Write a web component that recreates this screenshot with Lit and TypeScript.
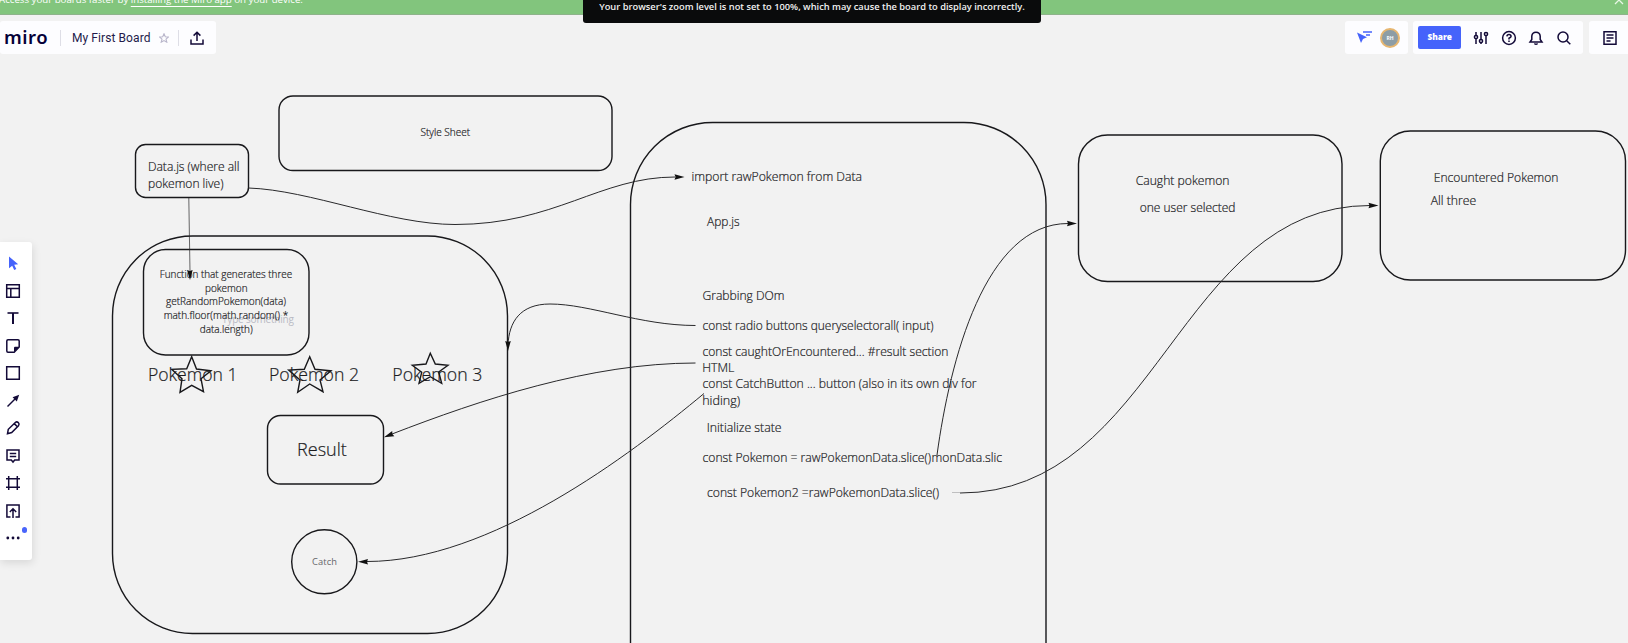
import { LitElement, html, svg, css } from "lit";
import { customElement } from "lit/decorators.js";

type Label = [x: number, y: number, width: number, size: number, text: string];

const boxes = [
  [279, 96, 333, 74.5, 14],
  [135.5, 144.5, 113, 53, 10],
  [112.5, 236, 395, 397.5, 80],
  [143.5, 249.5, 165.5, 105.5, 22],
  [267.5, 415.5, 116, 68.5, 13],
  [630.5, 122.5, 415.5, 640, 82],
  [1078.5, 135, 263.5, 146.5, 29],
  [1380.3, 131, 245.2, 149, 30],
];

const labels: Label[] = [
  [420.5, 135.8, 49.5, 10, "Style Sheet"],
  [148, 171.3, 91.5, 12, "Data.js (where all"],
  [148, 187.7, 75.5, 12, "pokemon live)"],
  [159.7, 277.8, 132.5, 10, "Function that generates three"],
  [205, 291.6, 42.5, 10, "pokemon"],
  [166, 305.3, 120, 10, "getRandomPokemon(data)"],
  [163.7, 319, 124.5, 10, "math.floor(math.random() *"],
  [199.7, 332.6, 53, 10, "data.length)"],
  [148, 380.6, 89.5, 17.5, "Pokemon 1"],
  [269, 380.6, 90, 17.5, "Pokemon 2"],
  [392.3, 380.6, 90, 17.5, "Pokemon 3"],
  [297, 456, 49.8, 18, "Result"],
  [691.5, 181, 170.5, 12, "import rawPokemon from Data"],
  [707, 225.5, 32.5, 12, "App.js"],
  [702.5, 300, 82, 12, "Grabbing DOm"],
  [702.5, 330.3, 231, 12, "const radio buttons queryselectorall( input)"],
  [702.5, 355.8, 246, 12, "const caughtOrEncountered... #result section"],
  [702.2, 372, 32, 12, "HTML"],
  [702.5, 388.3, 274, 12, "const CatchButton ... button (also in its own div for"],
  [702.2, 405, 38, 12, "hiding)"],
  [706.7, 432, 74.8, 12, "Initialize state"],
  [702.5, 462.3, 228.5, 12, "const Pokemon = rawPokemonData.slice()"],
  [931.5, 462.3, 70.5, 12, "monData.slic"],
  [707, 497.3, 232, 12, "const Pokemon2 =rawPokemonData.slice()"],
  [1135.7, 185, 93.8, 12, "Caught pokemon"],
  [1139.7, 212, 95.8, 12, "one user selected"],
  [1433.8, 182, 124.7, 12, "Encountered Pokemon"],
  [1430.7, 205, 45.5, 12, "All three"],
];

const connectors = [
  "M248.5 188C310 190 390 224.5 455 224.5C555 224.5 600 177 675 177",
  "M695.5 325.5C640 325.5 590 304 550 304C520 304 509 322 508 345",
  "M695.5 363C590 363 480 400 392 434",
  "M704 393.5C630 455 490 561.5 367 561.5",
  "M937 455C950 360 985 223.5 1068 223.5",
  "M960 493C1158 493 1178 205.5 1370 205.5",
];

// Tip position and heading in degrees.
const heads = [
  [684.5, 177, 0],
  [190, 280, 89],
  [508, 351, 90],
  [384, 437.3, 158],
  [358, 561.8, 180],
  [1077, 223.5, 0],
  [1378.5, 205.5, 0],
];

const stars = [
  "M191.7 356.7L196.5 369L211 370.7L201 378.7L203.5 391.7L191.7 385.3L180 392.3L182 378.7L171.7 369.3L186.7 368.7Z",
  "M309.7 356.7L315 369.3L331 370.7L320 380L323 391.7L309.7 384L297.7 392.3L300 380L288.7 370L304.3 369.3Z",
  "M430.3 353.3L435.3 364L448 365.3L438.7 372L441.7 383.3L430.3 376.7L419 383.3L421.7 372.3L412.3 365.3L426 364Z",
];

const icon = (body: unknown, size = 16) => html`<svg class="icon" width=${size} height=${size} viewBox="0 0 16 16">${body}</svg>`;

const tools = [
  svg`<path class="accent" d="M4 1.5L13.2 9.3L9.2 9.7L11.3 14L9.2 15L7.2 10.7L4 13.3Z"/>`,
  svg`<path d="M1.7 1.7H14.3V14.3H1.7ZM1.7 5.5H14.3M5.8 5.5V14.3"/>`,
  svg`<path d="M2.5 3H13.5" stroke-width="1.6"/><path d="M8 3V14" stroke-width="2"/>`,
  svg`<path d="M3 1.8H13Q14.2 1.8 14.2 3V9L9.2 14.2H3Q1.8 14.2 1.8 13V3Q1.8 1.8 3 1.8Z"/><path class="solid" d="M14 8.8H10Q9 8.8 9 10V14Z"/>`,
  svg`<path d="M1.7 1.7H14.3V14.3H1.7Z"/>`,
  svg`<path d="M2.5 13.5L10 6"/><path class="solid" d="M14.2 1.8L11.8 8.4L7.6 4.2Z"/>`,
  svg`<path d="M2.5 13.7L3.3 9.3L10.3 2.5Q11.8 1.2 13.3 2.6Q14.8 4.2 13.5 5.7L6.7 12.6ZM9.3 3.6L12.4 6.7"/>`,
  svg`<path d="M2 2H14V12H9.7L8 14L6.3 12H2ZM4.8 5.5H11.2M4.8 8.5H11.2"/>`,
  svg`<path d="M1 3.7H15M1 12.3H15M3.7 1V15M12.3 1V15"/>`,
  svg`<path d="M5.5 14H1.9V2H14.1V14H10.5M8 15V6M4.8 9L8 5.8L11.2 9"/>`,
  svg`<g class="solid"><circle cx="2.8" cy="8" r="1.4"/><circle cx="8" cy="8" r="1.4"/><circle cx="13.2" cy="8" r="1.4"/></g>`,
];

@customElement("miro-board")
class MiroBoard extends LitElement {
  static styles = css`
    :host { display: block; }
    svg { display: block; font-family: "Open Sans", sans-serif; }
    .shape { fill: none; stroke: #18181b; stroke-width: 1.4; }
    .line { fill: none; stroke: #29292b; stroke-width: 1; }
    .head { fill: #111; }
    .label { fill: #1c1c1f; font-weight: 300; stroke: #1c1c1f; stroke-width: 0.2; }
    .faint { fill: #66666a; font-weight: 400; }
    .ghost { fill: #b9bac4; }
  `;
  render() {
    return html`<svg width="1628" height="643" viewBox="0 0 1628 643">
      ${boxes.map(([x, y, w, h, r]) => svg`<rect class="shape" x=${x} y=${y} width=${w} height=${h} rx=${r}/>`)}
      <ellipse class="shape" cx="324.3" cy="561.8" rx="32.6" ry="32"/>
      <text class="ghost" x="222" y="323" font-size="10" textLength="72">Type something</text>
      ${labels.map(([x, y, w, s, t]) => svg`<text class="label" x=${x} y=${y} font-size=${s} textLength=${w} lengthAdjust="spacingAndGlyphs">${t}</text>`)}
      <text class="faint" x="312" y="564.8" font-size="9.3" textLength="25">Catch</text>
      <path class="line" d="M188.8 198L190 272" stroke-opacity=".7"/>
      ${connectors.map((d) => svg`<path class="line" d=${d}/>`)}
      <path class="line" d="M952 492.5H960" stroke-opacity=".25"/>
      ${heads.map(([x, y, a]) => svg`<path class="head" transform="translate(${x} ${y}) rotate(${a})" d="M0 0L-10 -2.8L-9 0L-10 2.8Z"/>`)}
      ${stars.map((d) => svg`<path class="shape" d=${d}/>`)}
    </svg>`;
  }
}

@customElement("app-root")
class AppRoot extends LitElement {
  static styles = css`
    :host { display: block; position: relative; width: 1628px; height: 643px; overflow: hidden; background: #f2f2f2; font-family: "Open Sans", sans-serif; color: #0d0632; }
    .canvas { position: absolute; inset: 0; }
    .chrome { position: relative; display: flex; flex-direction: column; height: 643px; }
    .banner { flex: none; height: 14px; background: #82c57d; border-bottom: 1px solid #8eb38b; box-sizing: content-box; display: flex; justify-content: space-between; overflow: hidden; color: #fff; font-size: 9.7px; line-height: 14px; }
    .notice { margin: -7px 0 0 -1px; white-space: nowrap; }
    .notice u { text-underline-offset: 3px; }
    .close { margin: -5px 4px 0 0; }
    .toast { position: absolute; left: 583px; top: 0; width: 458px; height: 23px; box-sizing: border-box; text-align: center; background: #0a0b0c; border-radius: 0 0 3px 3px; color: #f1f1f1; font-size: 9.3px; font-weight: 600; line-height: 14px; white-space: nowrap; }
    .bar { display: flex; justify-content: space-between; height: 33px; margin-top: 6px; flex: none; }
    .group { display: flex; gap: 5px; }
    .panel { display: flex; align-items: center; background: #fdfdff; border-radius: 3px; box-sizing: border-box; }
    .left { width: 216px; padding-left: 4px; }
    .logo { font: 600 18.5px "Noto Sans", sans-serif; letter-spacing: 0.5px; line-height: 24px; color: #050038; width: 45px; margin-top: -2px; }
    .rule { width: 1px; height: 16px; background: #dedee6; margin-left: 11px; }
    .title { font-family: Roboto, sans-serif; font-size: 12px; letter-spacing: 0.08px; margin-left: 11px; width: 80px; white-space: nowrap; color: #241b4b; }
    .star { margin-left: 7px; }
    .star + .rule { margin-left: 9px; }
    .share-out { margin-left: 10px; }
    .people { width: 63px; padding-left: 12px; gap: 8px; }
    .avatar { width: 16px; height: 16px; border: 2px solid #e6b670; border-radius: 50%; background: #8d9da5; color: #fff; font-size: 5px; font-weight: 700; line-height: 16px; text-align: center; }
    .actions { width: 170px; padding-left: 5px; }
    .share { width: 44px; height: 23px; border-radius: 2px; background: #4563fb; color: #fff; font-size: 8.3px; font-weight: 800; line-height: 22px; text-align: center; margin-right: 12px; }
    .actions .icon { margin-right: 11.4px; }
    .notes { width: 39px; padding-left: 13px; margin-left: 1px; border-radius: 3px 0 0 3px; }
    .tools { display: flex; flex-direction: column; align-items: center; gap: 11.5px; width: 32px; height: 318px; margin-top: 188px; padding: 13px 6px 0 0; box-sizing: border-box; background: #fff; border-radius: 0 3px 3px 0; box-shadow: 1px 3px 9px #0000001c; position: relative; }
    .dot { position: absolute; left: 21.5px; top: 285px; width: 5.5px; height: 5.5px; border-radius: 50%; background: #4965fb; }
    .icon { display: block; flex: none; fill: none; stroke: #130a38; stroke-width: 1.5; }
    .accent { fill: #4563fb; stroke: none; }
    .solid { fill: #130a38; stroke: none; }
    .white { stroke: #e9f7e6; stroke-width: 1.3; }
    .muted { stroke: #b9b6cb; stroke-width: 1.1; }
    .blue { stroke: #4563fb; }
  `;
  render() {
    return html`
      <miro-board class="canvas"></miro-board>
      <div class="chrome">
        <div class="banner">
          <span class="notice">Access your boards faster by <u>installing the Miro app</u> on your device.</span>
          <svg class="close" width="10" height="10" viewBox="0 0 10 10"><path class="white" d="M1 1L9 9M9 1L1 9"/></svg>
        </div>
        <div class="bar">
          <div class="panel left">
            <span class="logo">miro</span><span class="rule"></span>
            <span class="title">My First Board</span>
            <svg class="star" width="10" height="10" viewBox="0 0 10 10" fill="none"><path class="muted" d="M5 .8L6.3 3.7L9.4 4L7 6.1L7.8 9.2L5 7.6L2.2 9.2L3 6.1L.6 4L3.7 3.7Z"/></svg>
            <span class="rule"></span>
            <span class="share-out">${icon(svg`<path d="M2 9.5V14H14V9.5M8 11V2.5M4.6 5.6L8 2.2L11.4 5.6"/>`)}</span>
          </div>
          <div class="group">
            <div class="panel people">
              <svg width="15" height="14" viewBox="0 0 15 14"><path class="accent" d="M0 1.5L10 6.2L6 8L4 12Z"/><path class="blue" d="M6 1H15M9 4H13" stroke-width="1.4"/></svg>
              <span class="avatar">RH</span>
            </div>
            <div class="panel actions">
              <span class="share">Share</span>
              ${icon(svg`<path d="M3 2V5M3 9V14M8 2V9M8 12V14M13 6V14"/><circle cx="3" cy="7" r="1.6"/><circle cx="8" cy="11" r="1.6"/><circle cx="13" cy="4" r="1.6"/>`)}
              ${icon(svg`<circle cx="8" cy="8" r="6.4"/><path d="M5.9 6.4Q6 4.5 8 4.5T10.1 6.3Q10.1 7.3 8 8.3V9.4M8 10.6V12"/>`)}
              ${icon(svg`<path d="M2 12H14L12.2 9.4V6.2Q11.8 2.3 8 2.3T3.8 6.2V9.4ZM6.4 13.5Q8 15 9.6 13.5"/>`)}
              ${icon(svg`<circle cx="7" cy="7" r="5"/><path d="M10.7 10.7L14.3 14.3"/>`)}
            </div>
            <div class="panel notes">${icon(svg`<path d="M2 1.8H14V14.2H2ZM4.5 5H11.5M4.5 8H11.5M4.5 11H8.5"/>`)}</div>
          </div>
        </div>
        <nav class="tools">${tools.map((t) => icon(t))}<span class="dot"></span></nav>
      </div>
      <div class="toast">Your browser's zoom level is not set to 100%, which may cause the board to display incorrectly.</div>
    `;
  }
}
